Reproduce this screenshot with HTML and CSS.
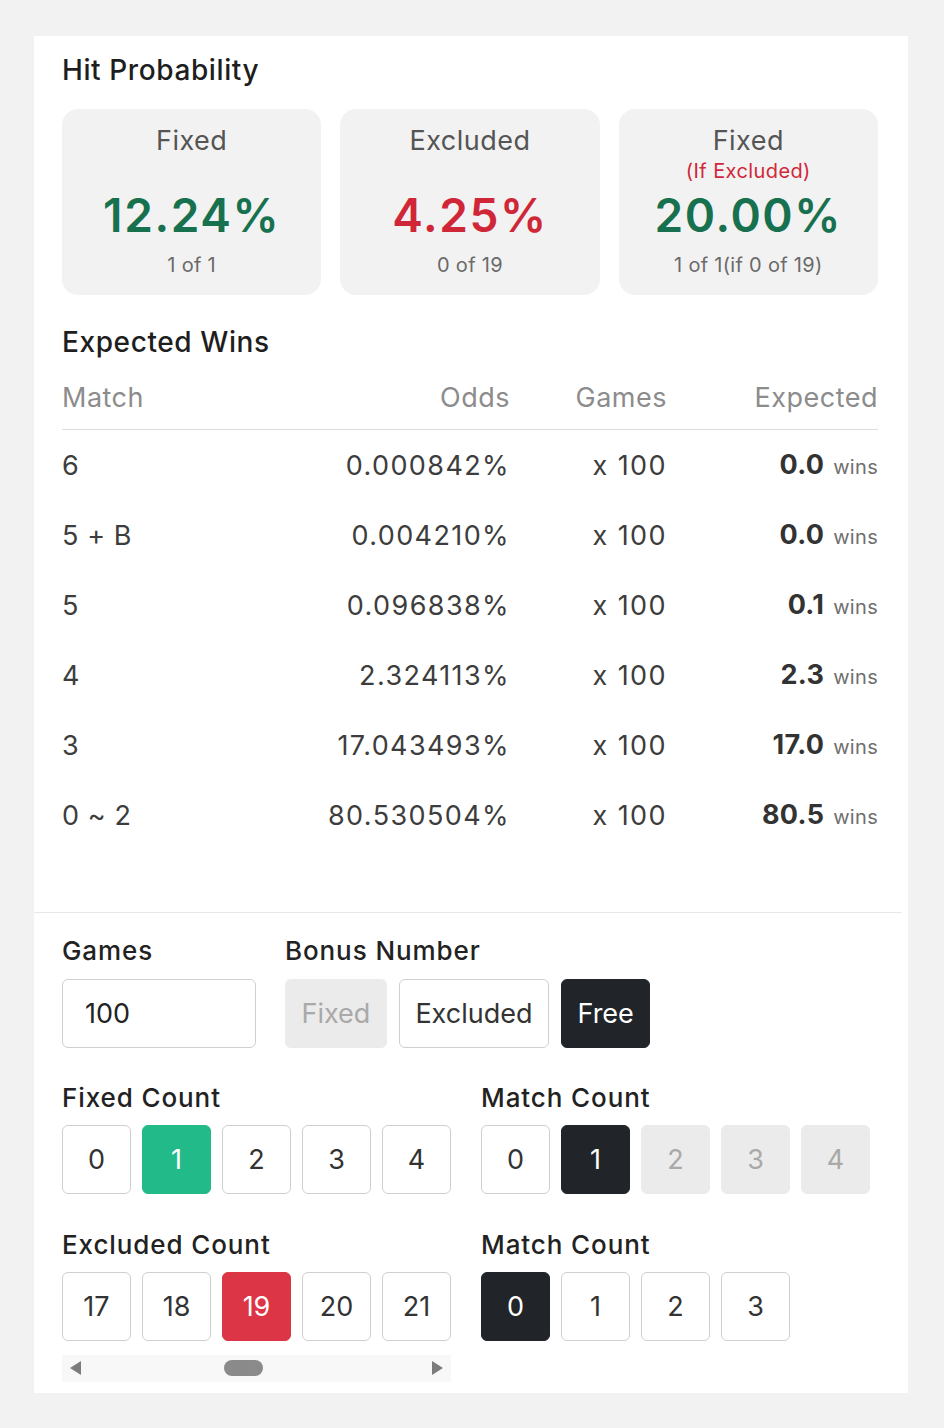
FILE: index.html
```html
<!DOCTYPE html>
<html lang="en">
<head>
<meta charset="utf-8">
<title>Hit Probability</title>
<link rel="stylesheet" href="styles.css">
</head>
<body>
<div class="panel">
  <section class="top">
    <h2 class="section-title">Hit Probability</h2>
    <div class="cards">
      <div class="card">
        <div class="card-title">Fixed</div>
        <div class="card-note hidden">(If Excluded)</div>
        <div class="card-value green">12.24%</div>
        <div class="card-sub">1 of 1</div>
      </div>
      <div class="card">
        <div class="card-title">Excluded</div>
        <div class="card-note hidden">(If Excluded)</div>
        <div class="card-value red">4.25%</div>
        <div class="card-sub">0 of 19</div>
      </div>
      <div class="card">
        <div class="card-title">Fixed</div>
        <div class="card-note">(If Excluded)</div>
        <div class="card-value green">20.00%</div>
        <div class="card-sub">1 of 1(if 0 of 19)</div>
      </div>
    </div>

    <h2 class="section-title title-wins">Expected Wins</h2>
    <table class="wins">
      <colgroup>
        <col class="c-match"><col class="c-odds"><col class="c-games"><col class="c-exp">
      </colgroup>
      <thead>
        <tr><th class="l">Match</th><th>Odds</th><th>Games</th><th>Expected</th></tr>
      </thead>
      <tbody>
        <tr><td class="l">6</td><td>0.000842%</td><td>x 100</td><td><b>0.0</b> <span class="unit">wins</span></td></tr>
        <tr><td class="l">5 + B</td><td>0.004210%</td><td>x 100</td><td><b>0.0</b> <span class="unit">wins</span></td></tr>
        <tr><td class="l">5</td><td>0.096838%</td><td>x 100</td><td><b>0.1</b> <span class="unit">wins</span></td></tr>
        <tr><td class="l">4</td><td>2.324113%</td><td>x 100</td><td><b>2.3</b> <span class="unit">wins</span></td></tr>
        <tr><td class="l">3</td><td>17.043493%</td><td>x 100</td><td><b>17.0</b> <span class="unit">wins</span></td></tr>
        <tr><td class="l">0 ~ 2</td><td>80.530504%</td><td>x 100</td><td><b>80.5</b> <span class="unit">wins</span></td></tr>
      </tbody>
    </table>
  </section>

  <section class="controls">
    <div class="row-top">
      <div class="group group-games">
        <div class="label">Games</div>
        <input class="games-input" type="text" value="100">
      </div>
      <div class="group">
        <div class="label">Bonus Number</div>
        <div class="btn-row">
          <button class="btn pill disabled">Fixed</button>
          <button class="btn pill">Excluded</button>
          <button class="btn pill dark">Free</button>
        </div>
      </div>
    </div>

    <div class="grid-two">
      <div class="group">
        <div class="label">Fixed Count</div>
        <div class="btn-row">
          <button class="btn sq">0</button>
          <button class="btn sq green-bg">1</button>
          <button class="btn sq">2</button>
          <button class="btn sq">3</button>
          <button class="btn sq">4</button>
        </div>
      </div>
      <div class="group">
        <div class="label">Match Count</div>
        <div class="btn-row">
          <button class="btn sq">0</button>
          <button class="btn sq dark">1</button>
          <button class="btn sq disabled">2</button>
          <button class="btn sq disabled">3</button>
          <button class="btn sq disabled">4</button>
        </div>
      </div>

      <div class="group">
        <div class="label">Excluded Count</div>
        <div class="btn-row">
          <button class="btn sq">17</button>
          <button class="btn sq">18</button>
          <button class="btn sq red-bg">19</button>
          <button class="btn sq">20</button>
          <button class="btn sq">21</button>
        </div>
        <div class="scrollbar">
          <span class="arrow arrow-left"></span>
          <span class="track"><span class="thumb"></span></span>
          <span class="arrow arrow-right"></span>
        </div>
      </div>
      <div class="group">
        <div class="label">Match Count</div>
        <div class="btn-row">
          <button class="btn sq dark">0</button>
          <button class="btn sq">1</button>
          <button class="btn sq">2</button>
          <button class="btn sq">3</button>
        </div>
      </div>
    </div>
  </section>
</div>
</body>
</html>
```
FILE: styles.css
```css
* { box-sizing: border-box; }

body {
  margin: 0;
  background: #f2f2f2;
  font-family: Inter, "Noto Sans", "DejaVu Sans", sans-serif;
  color: #222;
}

.panel {
  margin: 36px 36px 35px 34px;
  width: 874px;
  background: #fff;
}

.top {
  padding: 19px 30px 23px 28px;
}

.section-title {
  margin: 0;
  font-size: 28px;
  font-weight: 500;
  line-height: 31px;
  letter-spacing: 0.6px;
  color: #1e1e1e;
}

.cards {
  display: grid;
  grid-template-columns: repeat(3, 1fr);
  gap: 19px;
  margin-top: 23px;
}

.card {
  background: #f2f2f2;
  border-radius: 16px;
  padding: 16px 6px 17px;
  text-align: center;
  display: flex;
  flex-direction: column;
  align-items: center;
}

.card-title {
  font-size: 27px;
  line-height: 32px;
  letter-spacing: 0.5px;
  color: #555;
}

.card-note {
  font-size: 20px;
  line-height: 26px;
  letter-spacing: 0.4px;
  color: #d0283a;
  margin-top: 1px;
}

.hidden { visibility: hidden; }

.card-value {
  margin-top: 3px;
  font-size: 46px;
  line-height: 56px;
  font-weight: 600;
  letter-spacing: 1.6px;
}

.green { color: #17704e; }
.red { color: #cf2738; }

.card-sub {
  margin-top: 9px;
  font-size: 20px;
  line-height: 26px;
  color: #6a6a6a;
  letter-spacing: 0.3px;
}

.title-wins {
  margin-top: 32px;
  margin-bottom: 8px;
}

.wins {
  width: 100%;
  border-collapse: collapse;
  table-layout: fixed;
}

.c-match { width: 202px; }
.c-odds { width: 246px; }
.c-games { width: 157px; }
.c-exp { width: 211px; }

.wins th,
.wins td {
  text-align: right;
  padding: 0;
  white-space: nowrap;
}

.wins .l { text-align: left; }

.wins th {
  font-size: 27px;
  line-height: 32px;
  font-weight: 400;
  letter-spacing: 0.5px;
  color: #8c8c8c;
  padding: 16px 0 15px;
  border-bottom: 1px solid #dcdcdc;
}

.wins td {
  height: 70px;
  padding-top: 2px;
  font-size: 27px;
  line-height: 32px;
  color: #3d3d3d;
  letter-spacing: 1.4px;
  vertical-align: middle;
}

.wins td.l { letter-spacing: 0.6px; }

.wins td b {
  font-weight: 700;
  color: #333;
  letter-spacing: 0.3px;
}

.wins .unit {
  font-size: 20px;
  color: #6f6f6f;
  letter-spacing: 0.3px;
}

.controls {
  margin-top: 39px;
  margin-right: 6px;
  border-top: 1px solid #e8e8e8;
  padding: 23px 0 11px 28px;
}

.row-top {
  display: flex;
  gap: 29px;
}

.group-games { width: 194px; }

.label {
  font-size: 26px;
  line-height: 29px;
  font-weight: 500;
  letter-spacing: 0.9px;
  color: #222;
  margin-bottom: 14px;
}

.games-input {
  display: block;
  width: 194px;
  height: 69px;
  border: 1px solid #cfcfcf;
  border-radius: 6px;
  padding: 0 22px;
  font-family: inherit;
  font-size: 27px;
  color: #222;
  background: #fff;
  outline: none;
}

.btn-row {
  display: flex;
  gap: 11px;
}

.btn {
  font-family: inherit;
  font-size: 27px;
  height: 69px;
  border: 1px solid #cfcfcf;
  border-radius: 6px;
  background: #fff;
  color: #333;
  padding: 0;
  display: flex;
  align-items: center;
  justify-content: center;
}

.pill {
  padding: 0 15.5px;
}
.btn-row .pill + .pill { margin-left: 1px; }

.sq { width: 69px; }

.btn.disabled {
  background: #ebebeb;
  border-color: #ebebeb;
  color: #a9a9a9;
}

.btn.dark {
  background: #212529;
  border-color: #212529;
  color: #fff;
}

.btn.green-bg {
  background: #22ba88;
  border-color: #22ba88;
  color: #fff;
}

.btn.red-bg {
  background: #dc3545;
  border-color: #dc3545;
  color: #fff;
}

.grid-two {
  display: grid;
  grid-template-columns: 389px 389px;
  column-gap: 30px;
  row-gap: 36px;
  margin-top: 35px;
}

.grid-two .label { margin-bottom: 13px; }

.scrollbar {
  margin-top: 14px;
  width: 389px;
  height: 27px;
  background: #f8f8f8;
  display: flex;
  align-items: center;
  padding: 0 8px;
}

.arrow {
  width: 0;
  height: 0;
  border-top: 7px solid transparent;
  border-bottom: 7px solid transparent;
}

.arrow-left { border-right: 11px solid #7c7c7c; }
.arrow-right { border-left: 11px solid #7c7c7c; }

.track {
  flex: 1;
  display: flex;
  align-items: center;
  padding-left: 143px;
}

.thumb {
  width: 39px;
  height: 16px;
  border-radius: 8px;
  background: #8a8a8a;
}
```
